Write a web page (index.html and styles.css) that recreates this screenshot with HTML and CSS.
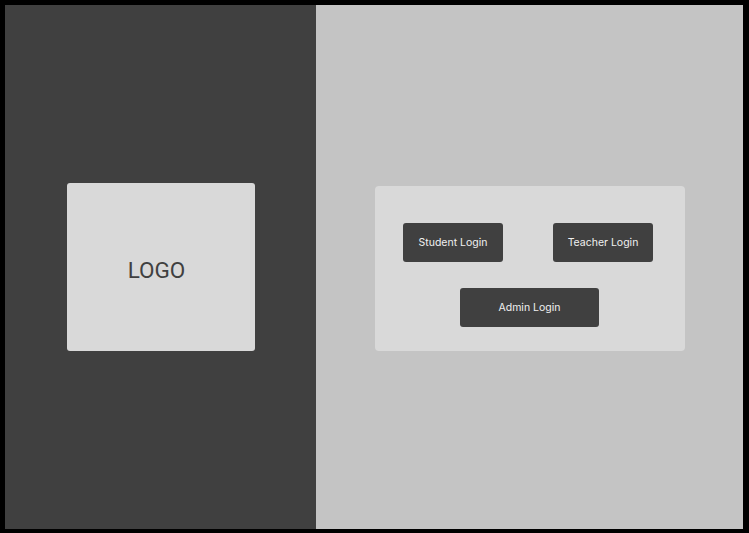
FILE: index.html
```html
<!DOCTYPE html>
<html lang="en">
<head>
  <meta charset="UTF-8">
  <meta name="viewport" content="width=device-width, initial-scale=1.0">
  <title>Login</title>
  <link rel="stylesheet" href="styles.css">
</head>
<body>

<div class="frame">
  <div class="side-left">
    <div class="logo-box">LOGO</div>
  </div>

  <div class="side-right">
    <div class="login-card">
      <div class="login-row">
        <button class="btn-login">Student Login</button>
        <button class="btn-login">Teacher Login</button>
      </div>
      <div class="login-row center">
        <button class="btn-login btn-wide">Admin Login</button>
      </div>
    </div>
  </div>
</div>

</body>
</html>
```

FILE: styles.css
```css
html, body {
  margin: 0;
  padding: 0;
}
body {
  background-color: #000;
  font-family: Inter, "Noto Sans", sans-serif;
}
.frame {
  display: flex;
  width: 749px;
  height: 533px;
  padding: 5px 6px 4px 5px;
  box-sizing: border-box;
}
.side-left {
  width: 311px;
  background-color: #404040;
  display: flex;
  align-items: center;
  justify-content: center;
}
.logo-box {
  width: 188px;
  height: 168px;
  margin-left: 1px;
  background-color: #d9d9d9;
  border-radius: 3px;
  display: flex;
  align-items: center;
  justify-content: center;
  font-family: Roboto, "Liberation Sans", sans-serif;
  font-size: 22.5px;
  color: #404040;
  padding: 5px 9px 0 0;
  box-sizing: border-box;
}
.side-right {
  flex: 1;
  background-color: #c4c4c4;
  display: flex;
  align-items: center;
  justify-content: center;
  padding-top: 3px;
}
.login-card {
  width: 310px;
  height: 165px;
  margin-left: 1px;
  box-sizing: border-box;
  padding: 37px 32px 24px 28px;
  background-color: #d9d9d9;
  border-radius: 4px;
  display: flex;
  flex-direction: column;
  gap: 26px;
}
.login-row {
  display: flex;
  justify-content: space-between;
}
.login-row.center {
  justify-content: center;
  padding-left: 3px;
}
.btn-login {
  width: 100px;
  height: 39px;
  padding: 0;
  border: none;
  border-radius: 3px;
  background-color: #404040;
  color: #f0f0f0;
  font-family: Inter, "Noto Sans", sans-serif;
  font-size: 10.5px;
  cursor: pointer;
}
.btn-wide {
  width: 139px;
}
```
